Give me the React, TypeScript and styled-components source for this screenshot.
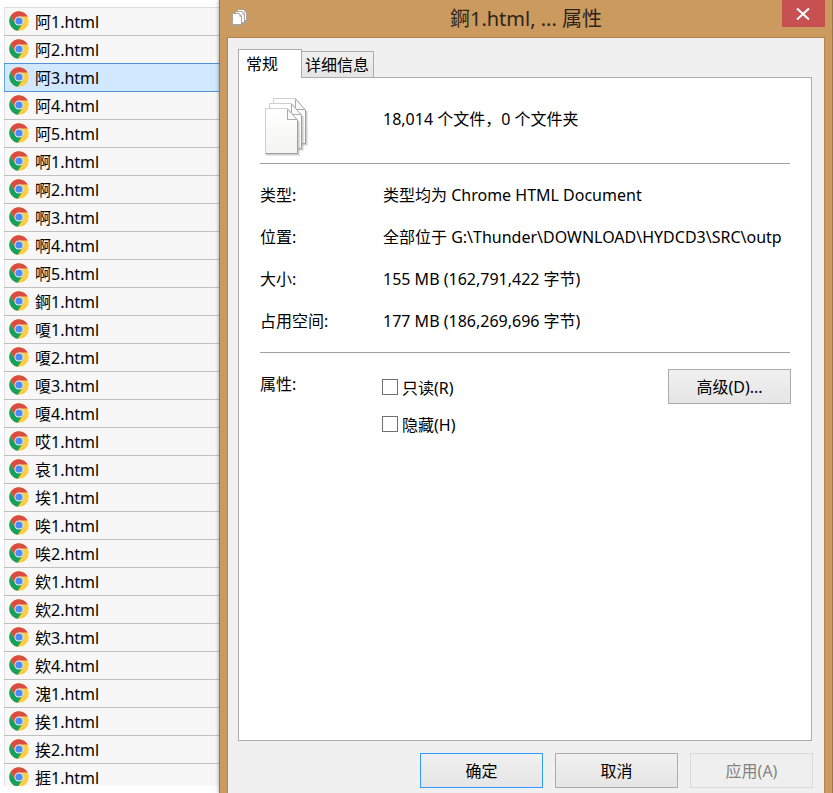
import React from "react";
import styled, { createGlobalStyle, css } from "styled-components";

const GlobalStyle = createGlobalStyle`
  *, *::before, *::after {
    box-sizing: border-box;
  }
  body {
    margin: 0;
    background: #fff;
    color: #000;
    font: 16px/24px "Noto Sans", "Noto Sans CJK SC", sans-serif;
    overflow: hidden;
  }
  button, input {
    font: inherit;
    color: inherit;
  }
`;

const Desktop = styled.main`
  display: grid;
  grid-template-columns: 219px minmax(0, 1fr);
  height: 100vh;
`;

const FileList = styled.ul`
  list-style: none;
  margin: 7px 0 7px 4px;
  padding: 0;
  overflow: hidden;
`;

const FileRow = styled.li<{ $state: "plain" | "selected" | "after" }>`
  display: flex;
  align-items: center;
  gap: 6px;
  height: 28px;
  padding: 0 0 0 5px;
  background: #f7f7f7;
  border-top: 1px solid #c0c0c0;
  box-shadow: inset 1px 0 #e2e2e2;
  &:first-child {
    border-top-color: #dcdcdc;
  }
  ${(p) =>
    p.$state === "selected" &&
    css`
      background: #d1e8ff;
      border-top-color: #4f94d8;
      box-shadow: inset 1px 0 #66a7e8;
    `}
  ${(p) =>
    p.$state === "after" &&
    css`
      border-top-color: #4f94d8;
    `}
  svg {
    flex: none;
    margin-bottom: 1px;
  }
`;

const Dialog = styled.section`
  display: flex;
  flex-direction: column;
  padding: 0 7px;
  background: #cb9a5e;
  border: solid #9c7646;
  border-width: 0 1px;
  box-shadow: -1px 0 3px rgba(0, 0, 0, 0.25);
`;

const TitleBar = styled.header`
  display: grid;
  grid-template-columns: 43px minmax(0, 1fr) 43px;
  height: 37px;
  svg {
    display: block;
  }
`;

const TitleIcon = styled.span`
  padding: 8px 0 0 5px;
`;

const Title = styled.h1`
  margin: 0;
  font-size: 20px;
  line-height: 38px;
  font-weight: 400;
  text-align: center;
  color: #2c241a;
`;

const CloseButton = styled.button`
  display: grid;
  place-items: center;
  height: 27px;
  padding: 0;
  border: 0;
  background: #c75050;
`;

const Client = styled.div`
  flex: 1;
  display: flex;
  flex-direction: column;
  padding: 11px 10px 5px;
  background: #f0f0f0;
  border: 1px solid #b1824b;
  border-bottom: 0;
`;

const TabStrip = styled.div`
  display: flex;
  align-items: flex-end;
  height: 28px;
`;

const Tab = styled.button<{ $active?: boolean }>`
  height: 26px;
  padding: 0 4px 0 3px;
  line-height: 24px;
  border: 1px solid #acacac;
  border-left: 0;
  border-bottom: 0;
  background: linear-gradient(#f0f0f0, #e5e5e5);
  white-space: nowrap;
  ${(p) =>
    p.$active &&
    css`
      position: relative;
      height: 29px;
      width: 64px;
      margin-bottom: -1px;
      padding: 0 0 0 7px;
      text-align: left;
      border-left: 1px solid #acacac;
      background: #fff;
    `}
`;

const Panel = styled.div`
  flex: 1;
  margin-right: 2px;
  padding: 20px 21px;
  background: #fff;
  border: 1px solid #acacac;
`;

const Summary = styled.div`
  display: grid;
  grid-template-columns: 123px minmax(0, 1fr);
  height: 65px;
  svg {
    margin-left: 5px;
  }
  p {
    margin: 9px 0 0;
  }
`;

const Divider = styled.hr`
  margin: 0;
  border: 0;
  border-top: 1px solid #a0a0a0;
`;

const Details = styled.dl`
  display: grid;
  grid-template-columns: 123px minmax(0, 1fr);
  row-gap: 18px;
  margin: 0;
  padding: 19px 0;
  dd {
    margin: 0;
    white-space: nowrap;
    overflow: hidden;
  }
`;

const Attributes = styled.div`
  display: grid;
  grid-template-columns: 122px minmax(0, 1fr) 123px;
  margin-right: -1px;
  padding-top: 16px;
`;

const AttributeName = styled.span`
  padding-top: 3px;
`;

const Checks = styled.div`
  display: flex;
  flex-direction: column;
  align-items: flex-start;
  gap: 13px;
  padding-top: 7px;
`;

const Check = styled.label`
  display: flex;
  align-items: center;
  gap: 4px;
  input {
    appearance: none;
    width: 16px;
    height: 16px;
    margin: 0 0 2px;
    border: 1px solid #707070;
    background: #fff;
  }
  input:checked {
    background: #707070;
  }
`;

const PushButton = styled.button<{ $primary?: boolean }>`
  width: 123px;
  height: 35px;
  padding: 0;
  border: 1px solid #acacac;
  background: linear-gradient(#f0f0f0, #e5e5e5);
  ${(p) =>
    p.$primary &&
    css`
      border-color: #3399ff;
    `}
  &:disabled {
    color: #838383;
    border-color: #d9d9d9;
    background: #efefef;
  }
`;

const Footer = styled.footer`
  display: flex;
  justify-content: flex-end;
  gap: 12px;
  margin-right: 1px;
  padding-top: 12px;
`;

const ChromeIcon = () => (
  <svg width="20" height="20" viewBox="0 0 40 40" aria-hidden="true">
    <circle cx="20" cy="20" r="19.5" fill="#ffcd42" />
    <path d="M3.1 10.2A19.5 19.5 0 0 0 17.5 39.3L27.8 24.5 20 20 12.2 24.5z" fill="#17a05d" />
    <path d="M3.1 10.2A19.5 19.5 0 0 1 37.3 11H20L12.2 24.5z" fill="#dc4d41" />
    <circle cx="20" cy="20" r="9" fill="#f1f1f1" />
    <circle cx="20" cy="20" r="7.2" fill="#4a8bf5" />
  </svg>
);

const FilesIcon = () => (
  <svg width="44" height="58" viewBox="0 0 44 58" aria-hidden="true">
    <defs>
      <linearGradient id="paper" x1="0" y1="0" x2="0" y2="1">
        <stop offset="0" stopColor="#ffffff" />
        <stop offset="1" stopColor="#f3f3f2" />
      </linearGradient>
    </defs>
    {[
      [8, 0],
      [4, 5],
      [0, 10],
    ].map(([x, y]) => (
      <g key={x} transform={`translate(${x} ${y})`}>
        <path d="M33.5 13V46.5H1" fill="none" stroke="#b0b0b0" strokeWidth="2" opacity="0.6" />
        <path d="M.5.5H22.5L32.5 12V45.5H.5z" fill="url(#paper)" stroke="#cfcfcf" />
        <path d="M32.5 12V45.5H.5" fill="none" stroke="#a0a0a0" />
        <path d="M22.5 1V11.5H32z" fill="#fafafa" stroke="#ababab" />
      </g>
    ))}
  </svg>
);

const SmallFilesIcon = () => (
  <svg width="16" height="19" viewBox="0 0 16 19" aria-hidden="true">
    {[
      [5, 1],
      [3, 3],
      [0, 5],
    ].map(([x, y]) => (
      <g key={x} transform={`translate(${x} ${y})`}>
        <path d="M0 0H7L10 3V13H0z" fill="#a9a39b" />
        <path d="M1 1H7V4H9V11H1z" fill="#fff" />
        <path d="M7 1V4H9z" fill="#dcdcdc" />
      </g>
    ))}
  </svg>
);

const groups: [string, number][] = [
  ["阿", 5],
  ["啊", 5],
  ["錒", 1],
  ["嗄", 4],
  ["哎", 1],
  ["哀", 1],
  ["埃", 1],
  ["唉", 2],
  ["欸", 4],
  ["溾", 1],
  ["挨", 2],
  ["捱", 1],
];

const files = groups.flatMap(([name, count]) =>
  Array.from({ length: count }, (_, i) => `${name}${i + 1}.html`)
);

const selected = 2;

const details = [
  ["类型:", "类型均为 Chrome HTML Document"],
  ["位置:", "全部位于 G:\\Thunder\\DOWNLOAD\\HYDCD3\\SRC\\outp"],
  ["大小:", "155 MB (162,791,422 字节)"],
  ["占用空间:", "177 MB (186,269,696 字节)"],
];

export default function App() {
  return (
    <Desktop lang="zh-CN">
      <GlobalStyle />
      <FileList>
        {files.map((file, i) => (
          <FileRow
            key={file}
            $state={i === selected ? "selected" : i === selected + 1 ? "after" : "plain"}
          >
            <ChromeIcon />
            <span>{file}</span>
          </FileRow>
        ))}
      </FileList>
      <Dialog role="dialog" aria-labelledby="dialog-title">
        <TitleBar>
          <TitleIcon>
            <SmallFilesIcon />
          </TitleIcon>
          <Title id="dialog-title">錒1.html, ... 属性</Title>
          <CloseButton aria-label="关闭">
            <svg width="15" height="12" viewBox="0 0 15 12" aria-hidden="true">
              <path d="M1 0.5L13 11.5M13 0.5L1 11.5" stroke="#fff" strokeWidth="2" />
            </svg>
          </CloseButton>
        </TitleBar>
        <Client>
          <TabStrip role="tablist">
            <Tab role="tab" aria-selected="true" $active>
              常规
            </Tab>
            <Tab role="tab" aria-selected="false">
              详细信息
            </Tab>
          </TabStrip>
          <Panel role="tabpanel">
            <Summary>
              <FilesIcon />
              <p>18,014 个文件，0 个文件夹</p>
            </Summary>
            <Divider />
            <Details>
              {details.map(([name, value]) => (
                <React.Fragment key={name}>
                  <dt>{name}</dt>
                  <dd>{value}</dd>
                </React.Fragment>
              ))}
            </Details>
            <Divider />
            <Attributes>
              <AttributeName>属性:</AttributeName>
              <Checks>
                <Check>
                  <input type="checkbox" />
                  只读(R)
                </Check>
                <Check>
                  <input type="checkbox" />
                  隐藏(H)
                </Check>
              </Checks>
              <PushButton>高级(D)...</PushButton>
            </Attributes>
          </Panel>
          <Footer>
            <PushButton $primary>确定</PushButton>
            <PushButton>取消</PushButton>
            <PushButton disabled>应用(A)</PushButton>
          </Footer>
        </Client>
      </Dialog>
    </Desktop>
  );
}
